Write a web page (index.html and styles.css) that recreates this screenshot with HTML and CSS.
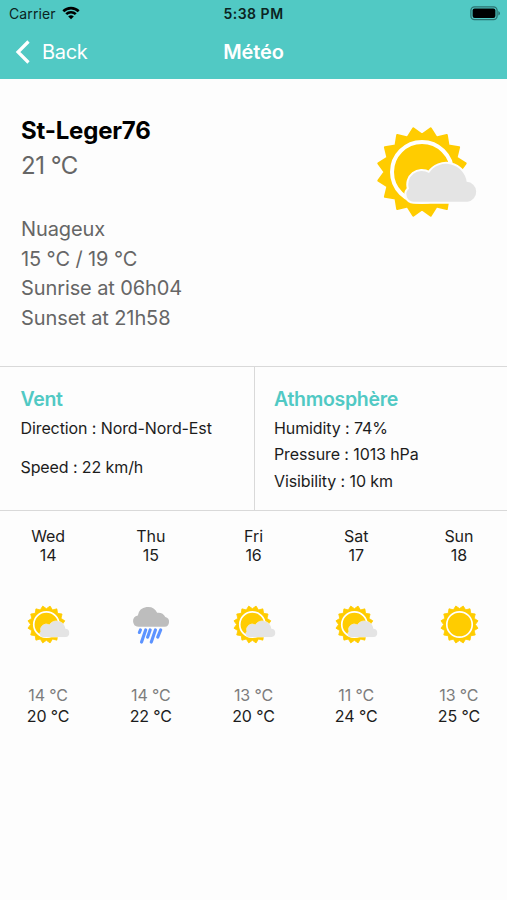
FILE: index.html
```
<!DOCTYPE html>
<html lang="fr">
<head>
    <meta charset="UTF-8">
    <meta name="viewport" content="width=device-width, initial-scale=1.0">
    <title>Météo</title>
    <link rel="stylesheet" href="styles.css">
</head>
<body>
    <!-- Shared weather icons -->
    <svg class="sprite" aria-hidden="true">
        <symbol id="sun" viewBox="-46 -46 92 92">
            <path class="rays" d="M37.5 0L43.7 8.7L34.6 14.4L37.1 24.8L26.5 26.5L24.8 37.1L14.4 34.6L8.7 43.7L0 37.5L-8.7 43.7L-14.4 34.6L-24.8 37.1L-26.5 26.5L-37.1 24.8L-34.6 14.4L-43.7 8.7L-37.5 0L-43.7 -8.7L-34.6 -14.4L-37.1 -24.8L-26.5 -26.5L-24.8 -37.1L-14.4 -34.6L-8.7 -43.7L0 -37.5L8.7 -43.7L14.4 -34.6L24.8 -37.1L26.5 -26.5L37.1 -24.8L34.6 -14.4L43.7 -8.7Z"/>
            <circle class="ring" r="30"/>
        </symbol>
        <symbol id="cloudy" viewBox="-46 -46 102 92">
            <use href="#sun" x="-46" y="-46" width="92" height="92"/>
            <path class="cloud" d="M-8.5 29.7A7.3 7.3 0 0 1 -13 16.8A13.5 13.5 0 0 1 7 1A20.7 20.7 0 0 1 44.7 9.8A10 10 0 0 1 45.5 29.7Z"/>
        </symbol>
        <symbol id="rain" viewBox="0 0 40 40">
            <path class="rain-cloud" d="M6.5 22.4A5.9 5.9 0 0 1 6 10.7A10.5 10.5 0 0 1 25.8 8A8.2 8.2 0 0 1 34.2 12.4A5.1 5.1 0 0 1 33.5 22.4Z"/>
            <path class="drops" d="M8.6 25.6L7.6 28.2M14 25.6L9.8 38M18.6 25.6L16 33M24 25.6L19.8 38M29.4 25.6L26.4 33"/>
        </symbol>
    </svg>

    <header class="header">
        <div class="status-bar">
            <div class="carrier">
                <span>Carrier</span>
                <svg class="wifi" viewBox="0 0 18 14">
                    <path d="M1.3 5.3a11 11 0 0 1 15.4 0M4.2 8.2a6.8 6.8 0 0 1 9.6 0"/>
                    <path class="dot" d="M9 13.3L6.2 10.5a4 4 0 0 1 5.6 0Z"/>
                </svg>
            </div>
            <span class="time">5:38 PM</span>
            <svg class="battery" viewBox="0 0 31 15">
                <rect class="shell" x=".9" y=".9" width="26.2" height="12.8" rx="3.6"/>
                <rect x="2.6" y="2.6" width="22.8" height="9.4" rx="2"/>
                <path class="cap" d="M28.3 5v4.6q1.7-.7 1.7-2.3t-1.7-2.3Z"/>
            </svg>
        </div>
        <nav class="nav-bar">
            <a class="back">
                <svg class="chevron" viewBox="0 0 16 24"><path d="M13.5 1.5L3 12L13.5 22.5"/></svg>
                <span>Back</span>
            </a>
            <h1 class="title">Météo</h1>
        </nav>
    </header>

    <main>
        <section class="current">
            <div>
                <h2 class="city">St-Leger76</h2>
                <p class="temp">21 °C</p>
                <div class="details">
                    <p>Nuageux</p>
                    <p>15 °C / 19 °C</p>
                    <p>Sunrise at 06h04</p>
                    <p>Sunset at 21h58</p>
                </div>
            </div>
            <svg class="current-icon"><use href="#cloudy"/></svg>
        </section>

        <section class="infos">
            <div class="info wind">
                <h3>Vent</h3>
                <p>Direction : Nord-Nord-Est</p>
                <p>Speed : 22 km/h</p>
            </div>
            <div class="info">
                <h3>Athmosphère</h3>
                <p>Humidity : 74%</p>
                <p>Pressure : 1013 hPa</p>
                <p>Visibility : 10 km</p>
            </div>
        </section>

        <section class="forecast">
            <div class="day">
                <p>Wed</p>
                <p>14</p>
                <svg class="icon"><use href="#cloudy"/></svg>
                <p class="min">14 °C</p>
                <p class="max">20 °C</p>
            </div>
            <div class="day">
                <p>Thu</p>
                <p>15</p>
                <svg class="icon"><use href="#rain"/></svg>
                <p class="min">14 °C</p>
                <p class="max">22 °C</p>
            </div>
            <div class="day">
                <p>Fri</p>
                <p>16</p>
                <svg class="icon"><use href="#cloudy"/></svg>
                <p class="min">13 °C</p>
                <p class="max">20 °C</p>
            </div>
            <div class="day">
                <p>Sat</p>
                <p>17</p>
                <svg class="icon"><use href="#cloudy"/></svg>
                <p class="min">11 °C</p>
                <p class="max">24 °C</p>
            </div>
            <div class="day">
                <p>Sun</p>
                <p>18</p>
                <svg class="icon"><use href="#sun"/></svg>
                <p class="min">13 °C</p>
                <p class="max">25 °C</p>
            </div>
        </section>
    </main>
</body>
</html>
```
FILE: styles.css
```
* {
    box-sizing: border-box;
}

body {
    margin: 0;
    min-height: 100vh;
    background: #fdfdfd;
    color: #1c1c1c;
    font-family: Inter, "Liberation Sans", sans-serif;
    font-size: 16px;
    letter-spacing: -0.1px;
}

h1, h2, h3, p {
    margin: 0;
}

.sprite {
    display: none;
}

/* Header */
.header {
    height: 79px;
    background: #51c9c4;
}

.status-bar {
    display: grid;
    grid-template-columns: 1fr auto 1fr;
    align-items: center;
    height: 27px;
    padding: 0 6px 0 9px;
    color: #0b2422;
    font-size: 14px;
}

.carrier {
    display: flex;
    align-items: center;
    gap: 6px;
    letter-spacing: 0.1px;
}

.wifi {
    width: 18px;
    height: 14px;
    margin-top: -2px;
    fill: none;
    stroke: #000;
    stroke-width: 2.6;
}

.wifi .dot {
    fill: #000;
    stroke: none;
}

.time {
    margin-right: 3px;
    font-weight: 600;
    letter-spacing: 0.5px;
}

.battery {
    justify-self: end;
    width: 31px;
    height: 15px;
}

.battery .shell {
    fill: none;
    stroke: #2b7370;
    stroke-width: 1.3;
}

.battery .cap {
    fill: #2b7370;
}

.nav-bar {
    display: grid;
    grid-template-columns: 1fr auto 1fr;
    align-items: center;
    height: 50px;
    padding: 0 15px;
    color: #fff;
}

.back {
    display: flex;
    align-items: center;
    gap: 11px;
    font-size: 20px;
    letter-spacing: -0.3px;
}

.chevron {
    width: 16px;
    height: 24px;
    fill: none;
    stroke: #fff;
    stroke-width: 3.2;
}

.title {
    font-size: 20px;
    font-weight: 600;
}

/* Current weather */
.current {
    display: flex;
    justify-content: space-between;
    height: 288px;
    padding: 36px 29px 0 21px;
    border-bottom: 1px solid #d9d9d9;
    color: #666;
}

.city {
    color: #000;
    font-size: 24px;
    font-weight: 700;
    letter-spacing: -0.2px;
    line-height: 32px;
}

.temp {
    font-size: 24px;
    letter-spacing: -0.5px;
    line-height: 37px;
}

.details {
    margin-top: 31px;
    font-size: 20px;
    letter-spacing: -0.1px;
    line-height: 29.7px;
}

.current-icon {
    width: 102px;
    height: 92px;
    margin-top: 11px;
}

/* Wind and atmosphere */
.infos {
    display: grid;
    grid-template-columns: 255px 1fr;
    height: 144px;
    border-bottom: 1px solid #d9d9d9;
}

.info {
    padding: 18px 19px 0;
    line-height: 26.5px;
}

.info h3 {
    height: 29.5px;
    color: #51c9c4;
    font-size: 19.5px;
    font-weight: 600;
    letter-spacing: -0.3px;
    line-height: 29px;
}

.wind {
    padding-left: 20.5px;
    border-right: 1px solid #d9d9d9;
}

.wind p + p {
    margin-top: 13px;
}

/* Forecast */
.forecast {
    display: grid;
    grid-template-columns: repeat(5, 102.7px);
    justify-content: center;
    padding-top: 15.5px;
}

.day {
    display: flex;
    flex-direction: column;
    align-items: center;
    line-height: 19px;
}

.icon {
    --outline: 1.5;
    width: 43px;
    height: 39px;
    margin: 40.5px 0 40.5px 1px;
}

.min,
.max {
    line-height: 21.5px;
}

.min {
    color: #7c7c7c;
}

/* Icon colors */
.rays {
    fill: #fc0;
    stroke: #fc0;
    stroke-width: 2;
    stroke-linejoin: round;
}

.ring {
    fill: none;
    stroke: #fff;
    stroke-width: 4;
}

.cloud {
    fill: #e4e4e4;
    stroke: #fdfdfd;
    stroke-width: var(--outline, 4);
    paint-order: stroke;
}

.rain-cloud {
    fill: #bdbdbd;
}

.drops {
    fill: none;
    stroke: #5c93ff;
    stroke-width: 3.2;
    stroke-linecap: round;
}
```
